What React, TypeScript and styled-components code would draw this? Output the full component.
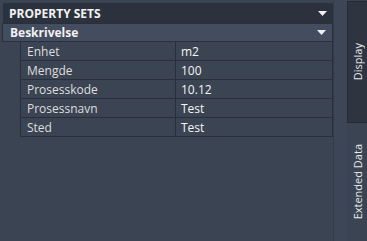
import { Fragment } from "react";
import styled, { createGlobalStyle } from "styled-components";

const Global = createGlobalStyle`
  html, body {
    margin: 0;
    padding: 0;
    background: #3b4452;
    font-family: "Open Sans", "Noto Sans", sans-serif;
    overflow: hidden;
  }
`;

const Page = styled.div`
  display: flex;
  width: 367px;
  height: 241px;
  background: #3b4452;
`;

const Main = styled.div`
  width: 334px;
  padding-top: 3px;
  display: flex;
  flex-direction: column;
`;

const Gutter = styled.div`
  width: 13px;
  background: #3d4656;
  border-left: 1px solid #353c49;
`;

const SectionHeader = styled.div<{ $level: 1 | 2 }>`
  display: flex;
  align-items: center;
  justify-content: space-between;
  height: ${(p) => (p.$level === 1 ? 20 : 19)}px;
  margin-left: ${(p) => (p.$level === 1 ? 3 : 2)}px;
  padding: 0 6px 0 ${(p) => (p.$level === 1 ? 6 : 7)}px;
  box-sizing: border-box;
  background: ${(p) => (p.$level === 1 ? "#2c323d" : "#444d5f")};
  border: ${(p) => (p.$level === 1 ? "none" : "1px solid #2a2f39")};
  color: #f2f2f2;
  font-size: 12px;
  font-weight: 700;
`;

const Caret = () => (
  <svg width="9" height="5" viewBox="0 0 9 5">
    <path d="M0 0 H9 L4.5 5 Z" fill="#f0f0f0" />
  </svg>
);

const Table = styled.div`
  margin-left: 20px;
  display: grid;
  grid-template-columns: 154px 1fr;
  border-left: 1px solid #2a2f39;
  border-right: 1px solid #2a2f39;
`;

const Cell = styled.div<{ $value?: boolean }>`
  height: 19px;
  box-sizing: border-box;
  border-bottom: 1px solid #2a2f39;
  border-left: ${(p) => (p.$value ? "1px solid #2a2f39" : "none")};
  padding-left: ${(p) => (p.$value ? 5 : 6)}px;
  display: flex;
  align-items: center;
  font-size: 12px;
  color: ${(p) => (p.$value ? "#f4f4f4" : "#dedede")};
  background: #3b4453;
`;

const TabStrip = styled.div`
  width: 20px;
  padding-top: 1px;
  display: flex;
  flex-direction: column;
`;

const Tab = styled.div<{ $active?: boolean; $h: number }>`
  height: ${(p) => p.$h}px;
  box-sizing: border-box;
  background: ${(p) => (p.$active ? "#2e3440" : "transparent")};
  border: 1px solid ${(p) => (p.$active ? "#252a33" : "transparent")};
  border-right: none;
  display: flex;
  align-items: center;
  justify-content: center;
  color: #e8e8e8;
  font-size: 11px;
`;

const TabLabel = styled.span`
  writing-mode: vertical-rl;
  transform: rotate(180deg);
  white-space: nowrap;
`;

const rows = [
  ["Enhet", "m2"],
  ["Mengde", "100"],
  ["Prosesskode", "10.12"],
  ["Prosessnavn", "Test"],
  ["Sted", "Test"],
];

export default function App() {
  return (
    <>
      <Global />
      <Page>
        <Main>
          <SectionHeader $level={1}>
            PROPERTY SETS
            <Caret />
          </SectionHeader>
          <SectionHeader $level={2}>
            Beskrivelse
            <Caret />
          </SectionHeader>
          <Table>
            {rows.map(([k, v]) => (
              <Fragment key={k}>
                <Cell>{k}</Cell>
                <Cell $value>{v}</Cell>
              </Fragment>
            ))}
          </Table>
        </Main>
        <Gutter />
        <TabStrip>
          <Tab $active $h={122}>
            <TabLabel>Display</TabLabel>
          </Tab>
          <Tab $h={118}>
            <TabLabel>Extended Data</TabLabel>
          </Tab>
        </TabStrip>
      </Page>
    </>
  );
}
